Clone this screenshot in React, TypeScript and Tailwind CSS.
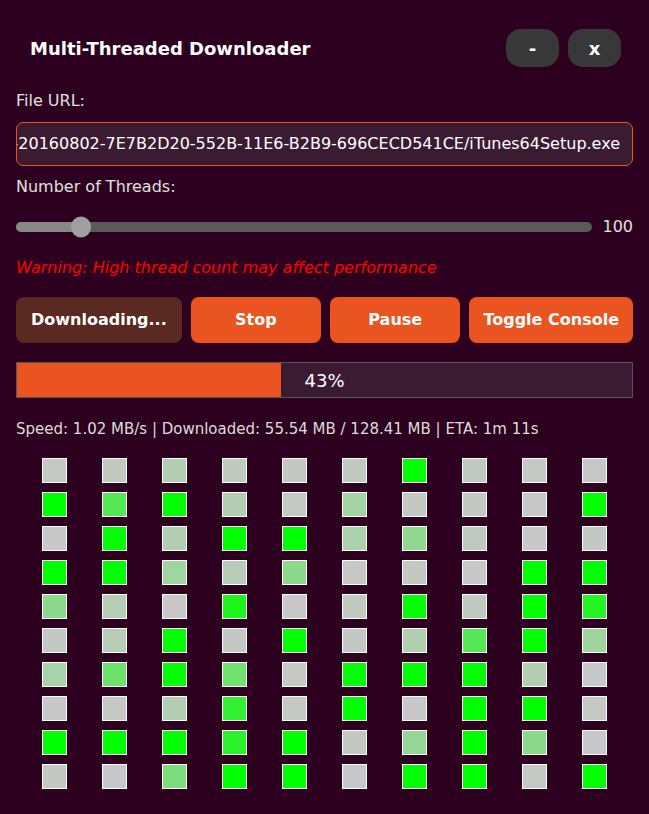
import React from 'react';

const G = '#00ff00';
// thread status colours, row by row
const threadColors = [
  ['#c6c8c4', '#c3c9c1', '#b3cdb3', '#bfcbbe', '#c4c8c2', '#c1c9c0', G, '#c0c9bf', '#c6c8c5', '#c7c7c6'],
  [G, '#55e855', G, '#b3cdb3', '#c5c8c3', '#a3d3a3', '#c4c8c3', '#c4c8c3', '#c8c8c8', G],
  ['#c8c8c8', G, '#b3cdb3', G, G, '#aad1aa', '#90d890', '#c0c9bf', '#c8c8c8', '#c3c9c2'],
  [G, G, '#a0d4a0', '#b7ccb7', '#8cd98c', '#c6c8c5', '#c3c9c2', '#c8c8c8', G, G],
  ['#8cd98c', '#b5cdb5', '#c8c8c8', '#1df51d', '#c8c8c8', '#c1c9c0', G, '#c0c9bf', G, '#22f522'],
  ['#c3c9c2', '#b7ccb7', G, '#c3c9c2', G, '#c4c8c3', '#b0ceb0', '#55e855', G, '#9dd59d'],
  ['#a8d2a8', '#6be36b', G, '#70e270', '#c5c8c3', G, G, G, '#b1ceb1', '#c8c8c8'],
  ['#c8c8c8', '#c5c8c3', '#b3cdb3', '#33f033', '#c5c8c3', G, '#c8c8c8', G, G, '#c5c8c3'],
  [G, G, G, '#2af22a', G, '#c3c9c2', '#96d696', G, '#8cd98c', '#c8c8c8'],
  ['#c3c9c2', '#c8c8c8', '#7cdd7c', G, G, '#c8c8c8', G, G, '#c6c8c5', G],
];

const url =
  'https://secure-appldnld.apple.com/itunes12/031-69284-20160802-7E7B2D20-552B-11E6-B2B9-696CECD541CE/iTunes64Setup.exe';

export default function App() {
  return (
    <div
      className="min-h-screen w-full bg-[#2c001e] px-4 text-[#e0e0e0]"
      style={{ fontFamily: '"DejaVu Sans", sans-serif' }}>

      {/* Title bar */}
      <div className="flex items-center justify-between pt-[29px] pl-[14px] pr-[12px]">
        <h1 className="text-[18px] font-bold text-white">Multi-Threaded Downloader</h1>
        <div className="flex gap-[9px]">
          <button className="h-[38px] w-[53px] rounded-[15px] bg-[#383838] text-[18px] font-bold text-white">-</button>
          <button className="h-[38px] w-[53px] rounded-[15px] bg-[#383838] text-[18px] font-bold text-white">x</button>
        </div>
      </div>

      {/* URL */}
      <div className="mt-6 text-[16px] leading-5">File URL:</div>
      <div className="mt-[11px] flex h-[44px] items-center justify-end overflow-hidden rounded-[7px] border border-[#e95420] bg-[#3b1b31] px-3">
        <span className="whitespace-nowrap text-[16px] text-white">{url}</span>
      </div>

      {/* Threads */}
      <div className="mt-[11px] text-[16px] leading-5">Number of Threads:</div>
      <div className="mt-5 flex h-5 items-center gap-[10px]">
        <div className="relative flex h-[10px] flex-1 rounded-full bg-[#5a5a5a]">
          <div className="h-full w-[70px] rounded-l-full bg-[#888888]" />
          <div className="absolute top-1/2 left-[55px] h-[21px] w-[20px] -translate-y-1/2 rounded-full bg-[#a0a0a0]" />
        </div>
        <span className="text-[16px] text-[#e0e0e0]">100</span>
      </div>
      <div className="mt-[21px] text-[16px] italic leading-5 text-[#ff0000]">
        Warning: High thread count may affect performance
      </div>

      {/* Controls */}
      <div className="mt-[19px] flex gap-[9px]">
        <button className="h-[46px] flex-1 whitespace-nowrap rounded-[8px] bg-[#5a2a22] px-[15px] text-[16px] font-bold text-white">
          Downloading...
        </button>
        <button className="h-[46px] flex-1 whitespace-nowrap rounded-[8px] bg-[#e95420] px-[15px] text-[16px] font-bold text-white">
          Stop
        </button>
        <button className="h-[46px] flex-1 whitespace-nowrap rounded-[8px] bg-[#e95420] px-[15px] text-[16px] font-bold text-white">
          Pause
        </button>
        <button className="h-[46px] flex-1 whitespace-nowrap rounded-[8px] bg-[#e95420] px-[14px] text-[16px] font-bold text-white">
          Toggle Console
        </button>
      </div>

      {/* Progress */}
      <div className="relative mt-[19px] h-[36px] border border-[#555555] bg-[#3b1b31]">
        <div className="h-full w-[43%] bg-[#e95420]" />
        <span className="absolute inset-0 flex items-center justify-center text-[18px] text-white">43%</span>
      </div>
      <div className="mt-[21px] text-[15px] leading-5 text-[#dcdcdc]">
        Speed: 1.02 MB/s | Downloaded: 55.54 MB / 128.41 MB | ETA: 1m 11s
      </div>

      {/* Thread grid */}
      <div className="mt-[19px] grid grid-cols-[repeat(10,60px)] justify-center gap-y-[9px]">
        {threadColors.flat().map((c, i) => (
          <div key={i} className="flex justify-center">
            <div className="h-[25px] w-[25px] border border-white" style={{ backgroundColor: c }} />
          </div>
        ))}
      </div>
    </div>
  );
}
